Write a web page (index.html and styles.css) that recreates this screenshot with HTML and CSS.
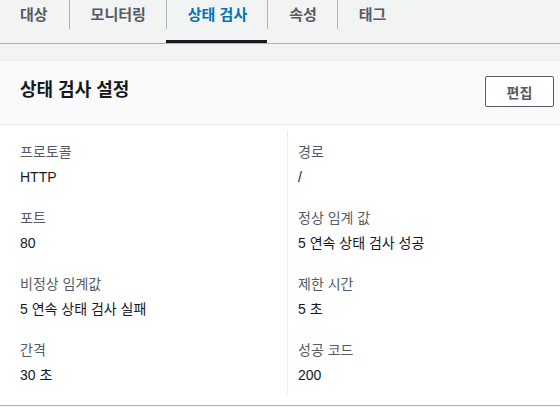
FILE: index.html
```html
<!DOCTYPE html>
<html lang="ko">
  <head>
    <meta charset="UTF-8" />
    <meta name="viewport" content="width=device-width, initial-scale=1.0" />
    <title>상태 검사</title>
    <link rel="stylesheet" href="styles.css">
  </head>
  <body>
    <!-- Tabs -->
    <ul class="tabs">
      <li class="tab"><span class="tab-label">대상</span></li>
      <li class="tab"><span class="tab-label">모니터링</span></li>
      <li class="tab active"><span class="tab-label">상태 검사</span></li>
      <li class="tab"><span class="tab-label">속성</span></li>
      <li class="tab"><span class="tab-label">태그</span></li>
    </ul>

    <!-- Health check settings card -->
    <div class="card">
      <div class="card-header">
        <h2>상태 검사 설정</h2>
        <button type="button">편집</button>
      </div>
      <div class="card-body">
        <div class="column">
          <div class="field">
            <div class="label">프로토콜</div>
            <div class="value">HTTP</div>
          </div>
          <div class="field">
            <div class="label">포트</div>
            <div class="value">80</div>
          </div>
          <div class="field">
            <div class="label">비정상 임계값</div>
            <div class="value">5 연속 상태 검사 실패</div>
          </div>
          <div class="field">
            <div class="label">간격</div>
            <div class="value">30 초</div>
          </div>
        </div>
        <div class="column divided">
          <div class="field">
            <div class="label">경로</div>
            <div class="value">/</div>
          </div>
          <div class="field">
            <div class="label">정상 임계 값</div>
            <div class="value">5 연속 상태 검사 성공</div>
          </div>
          <div class="field">
            <div class="label">제한 시간</div>
            <div class="value">5 초</div>
          </div>
          <div class="field">
            <div class="label">성공 코드</div>
            <div class="value">200</div>
          </div>
        </div>
      </div>
    </div>
  </body>
</html>
```

FILE: styles.css
```css
body {
  margin: 0;
  background-color: #f2f3f3;
  font-family: "Liberation Sans", "Noto Sans CJK KR", sans-serif;
  font-size: 14px;
  color: #16191f;
}
.tabs {
  display: flex;
  list-style: none;
  margin: 0 0 16px;
  padding: 0;
  border-bottom: 1px solid #aab7b8;
}
.tab {
  height: 43px;
  box-sizing: border-box;
}
.tab-label {
  display: block;
  padding: 0 20px 0 21px;
  line-height: 29px;
  border-left: 1px solid #aab7b8;
  color: #545b64;
  font-size: 15px;
  font-weight: bold;
}
.tab:first-child .tab-label {
  border-left: none;
  padding: 0 21px 0 20px;
}
.tab.active {
  border-bottom: 3px solid #16191f;
}
.tab.active .tab-label {
  color: #0073bb;
}
.card {
  background-color: #fff;
  border-top: 1px solid #eaeded;
  border-bottom: 1px solid #aab7b8;
  box-shadow: 0 1px 1px 0 rgba(0, 28, 36, 0.3);
}
.card-header {
  display: flex;
  align-items: center;
  justify-content: space-between;
  padding: 15px 6px 17px 20px;
  background-color: #fafafa;
  border-bottom: 1px solid #eaeded;
}
h2 {
  margin: 0 0 3px;
  font-size: 18px;
  line-height: 26px;
  font-weight: bold;
}
button {
  width: 69px;
  height: 31px;
  padding: 0;
  background-color: #fff;
  border: 1px solid #545b64;
  border-radius: 2px;
  color: #545b64;
  font-family: inherit;
  font-size: 14px;
  font-weight: bold;
}
.card-body {
  display: grid;
  grid-template-columns: 287px 1fr;
  padding: 5px 0 10px;
}
.column {
  display: flex;
  flex-direction: column;
  gap: 19px;
  padding: 11px 20px 9px;
}
.column.divided {
  border-left: 1px solid #eaeded;
  padding-left: 10px;
}
.label {
  line-height: 22px;
  color: #545b64;
  margin-bottom: 3px;
}
.value {
  line-height: 22px;
}
```
